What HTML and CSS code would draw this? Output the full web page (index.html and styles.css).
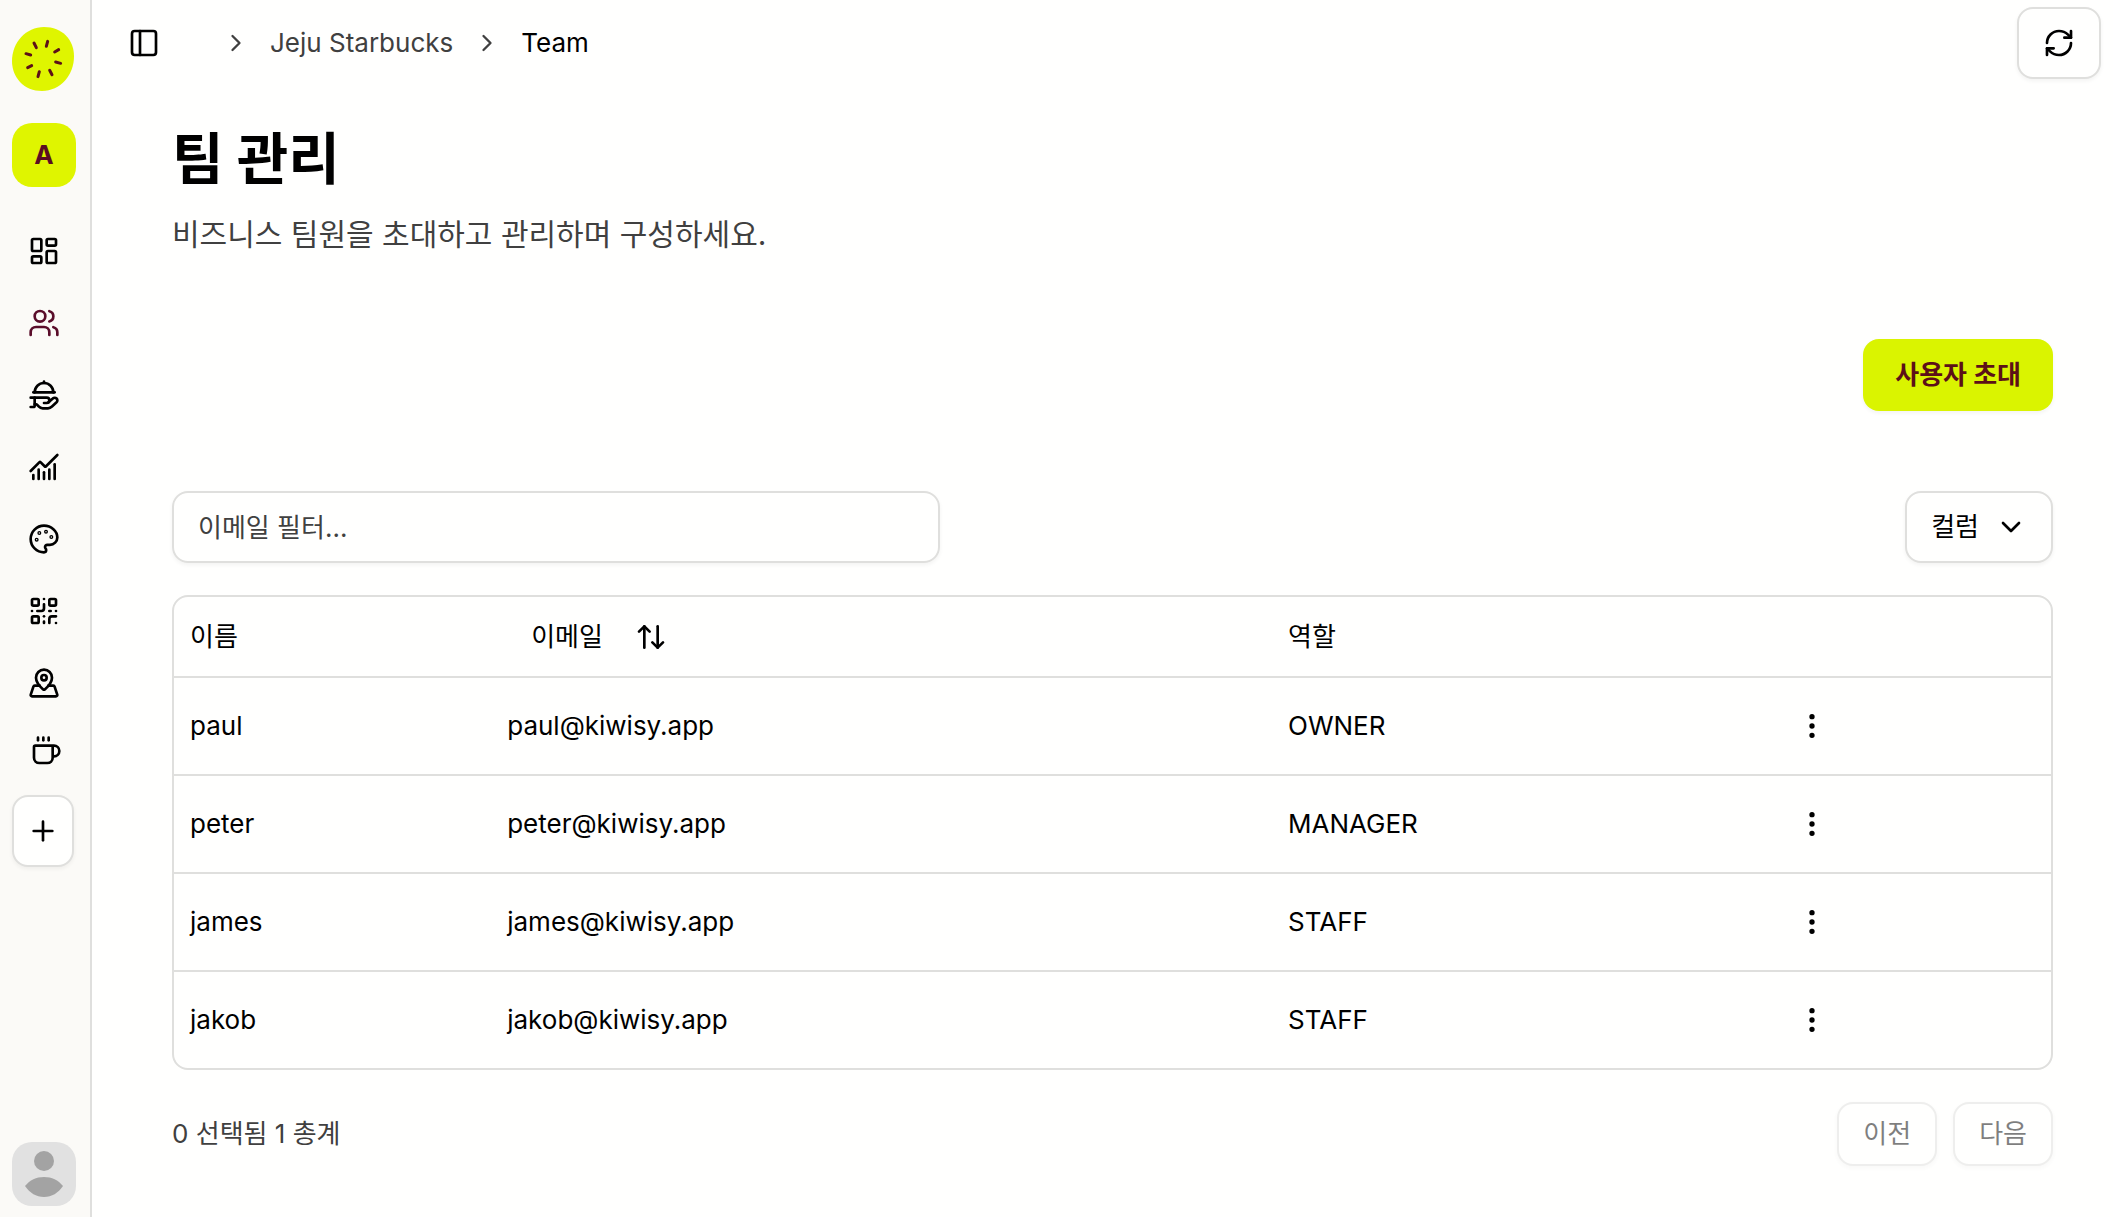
FILE: index.html
```html
<!DOCTYPE html>
<html lang="ko">
<head>
    <meta charset="UTF-8">
    <meta name="viewport" content="width=device-width, initial-scale=1.0">
    <title>팀 관리</title>
    <link rel="stylesheet" href="styles.css">
</head>
<body>
    <aside class="sidebar">
        <a href="#" class="logo" aria-label="Kiwisy">
            <svg viewBox="0 0 186 192">
                <path class="logo-skin" d="M96 0C151 0 186 38 186 88C186 145 145 192 90 192C36 192 0 152 0 102C0 46 42 0 96 0Z"/>
                <path class="logo-seeds" d="M66 48l7 14M107 43l-4 15M128 75l12-7M131 105l15 4M113 130l7 13M82 134l-4 15M47 122l12-6M42 80l14 4"/>
            </svg>
        </a>
        <button type="button" class="workspace">A</button>

        <nav class="nav">
            <a href="#" aria-label="Dashboard">
                <svg class="icon" viewBox="0 0 24 24"><rect width="7" height="9" x="3" y="3" rx="1"/><rect width="7" height="5" x="14" y="3" rx="1"/><rect width="7" height="9" x="14" y="12" rx="1"/><rect width="7" height="5" x="3" y="16" rx="1"/></svg>
            </a>
            <a href="#" class="active" aria-label="Team">
                <svg class="icon" viewBox="0 0 24 24"><path d="M16 21v-2a4 4 0 0 0-4-4H6a4 4 0 0 0-4 4v2"/><circle cx="9" cy="7" r="4"/><path d="M22 21v-2a4 4 0 0 0-3-3.87"/><path d="M16 3.13a4 4 0 0 1 0 7.75"/></svg>
            </a>
            <a href="#" aria-label="Service">
                <svg class="icon" viewBox="0 0 24 24"><path d="M12 3V2"/><path d="m15.4 17.4 3.2-2.8a2 2 0 1 1 2.8 2.9l-3.6 3.3c-.7.8-1.7 1.2-2.8 1.2h-4c-1.1 0-2.1-.4-2.8-1.2l-1.302-1.464A1 1 0 0 0 6.151 19H5"/><path d="M2 14h12a2 2 0 0 1 0 4h-2"/><path d="M4 10h16"/><path d="M5 10a7 7 0 0 1 14 0"/><path d="M5 14v6a1 1 0 0 1-1 1H2"/></svg>
            </a>
            <a href="#" aria-label="Analytics">
                <svg class="icon" viewBox="0 0 24 24"><path d="M12 16v5"/><path d="M16 14v7"/><path d="M20 10v11"/><path d="m22 3-8.646 8.646a.5.5 0 0 1-.708 0L9.354 8.354a.5.5 0 0 0-.707 0L2 15"/><path d="M4 18v3"/><path d="M8 14v7"/></svg>
            </a>
            <a href="#" aria-label="Theme">
                <svg class="icon" viewBox="0 0 24 24"><circle cx="13.5" cy="6.5" r=".5"/><circle cx="17.5" cy="10.5" r=".5"/><circle cx="8.5" cy="7.5" r=".5"/><circle cx="6.5" cy="12.5" r=".5"/><path d="M12 2C6.5 2 2 6.5 2 12s4.5 10 10 10c.926 0 1.648-.746 1.648-1.688 0-.437-.18-.835-.437-1.125-.29-.289-.438-.652-.438-1.125a1.64 1.64 0 0 1 1.668-1.668h1.996c3.051 0 5.555-2.503 5.555-5.554C21.965 6.012 17.461 2 12 2z"/></svg>
            </a>
            <a href="#" aria-label="QR">
                <svg class="icon" viewBox="0 0 24 24"><rect width="5" height="5" x="3" y="3" rx="1"/><rect width="5" height="5" x="16" y="3" rx="1"/><rect width="5" height="5" x="3" y="16" rx="1"/><path d="M21 16h-3a2 2 0 0 0-2 2v3"/><path d="M21 21v.01"/><path d="M12 7v3a2 2 0 0 1-2 2H7"/><path d="M3 12h.01"/><path d="M12 3h.01"/><path d="M12 16v.01"/><path d="M16 12h1"/><path d="M21 12v.01"/><path d="M12 21v-1"/></svg>
            </a>
            <a href="#" aria-label="Locations">
                <svg class="icon" viewBox="0 0 24 24"><path d="M18 8c0 3.613-3.869 7.429-5.393 8.795a1 1 0 0 1-1.214 0C9.87 15.429 6 11.613 6 8a6 6 0 0 1 12 0"/><circle cx="12" cy="8" r="2"/><path d="M8.714 14h-3.71a1 1 0 0 0-.948.683l-2.004 6A1 1 0 0 0 3 22h18a1 1 0 0 0 .948-1.316l-2-6a1 1 0 0 0-.949-.684h-3.712"/></svg>
            </a>
        </nav>

        <div class="shops">
            <a href="#" class="shop" aria-label="Cafe">
                <svg class="icon" viewBox="0 0 24 24"><path d="M10 2v2"/><path d="M14 2v2"/><path d="M16 8a1 1 0 0 1 1 1v8a4 4 0 0 1-4 4H7a4 4 0 0 1-4-4V9a1 1 0 0 1 1-1h14a4 4 0 1 1 0 8h-1"/><path d="M6 2v2"/></svg>
            </a>
            <button type="button" class="btn btn-add" aria-label="Add">
                <svg class="icon" viewBox="0 0 24 24"><path d="M5 12h14"/><path d="M12 5v14"/></svg>
            </button>
        </div>

        <button type="button" class="avatar" aria-label="Account">
            <svg viewBox="0 0 64 64"><circle cx="32" cy="19" r="10"/><path d="M13 44C18 38 24 35 32 35S46 38 51 44C46 51 40 55 32 55S18 51 13 44Z"/></svg>
        </button>
    </aside>

    <main class="main">
        <header class="topbar">
            <button type="button" class="btn-plain" aria-label="Toggle sidebar">
                <svg class="icon" viewBox="0 0 24 24"><rect width="18" height="18" x="3" y="3" rx="2"/><path d="M9 3v18"/></svg>
            </button>
            <nav class="breadcrumb" aria-label="Breadcrumb">
                <svg class="icon icon-sm" viewBox="0 0 24 24"><path d="m9 18 6-6-6-6"/></svg>
                <a href="#">Jeju Starbucks</a>
                <svg class="icon icon-sm" viewBox="0 0 24 24"><path d="m9 18 6-6-6-6"/></svg>
                <span class="current">Team</span>
            </nav>
            <button type="button" class="btn btn-refresh" aria-label="Refresh">
                <svg class="icon" viewBox="0 0 24 24"><path d="M3 12a9 9 0 0 1 9-9 9.75 9.75 0 0 1 6.74 2.74L21 8"/><path d="M21 3v5h-5"/><path d="M21 12a9 9 0 0 1-9 9 9.75 9.75 0 0 1-6.74-2.74L3 16"/><path d="M8 16H3v5"/></svg>
            </button>
        </header>

        <section class="content">
            <h1>팀 관리</h1>
            <p class="subtitle">비즈니스 팀원을 초대하고 관리하며 구성하세요.</p>

            <div class="actions">
                <button type="button" class="btn btn-primary">사용자 초대</button>
            </div>

            <div class="toolbar">
                <input type="text" class="filter" placeholder="이메일 필터..." aria-label="이메일 필터">
                <button type="button" class="btn">
                    컬럼
                    <svg class="icon" viewBox="0 0 24 24"><path d="m6 9 6 6 6-6"/></svg>
                </button>
            </div>

            <div class="table-wrap">
                <table>
                    <thead>
                        <tr>
                            <th class="col-name">이름</th>
                            <th class="col-email">
                                <button type="button" class="btn-plain btn-sort">
                                    이메일
                                    <svg class="icon" viewBox="0 0 24 24"><path d="m21 16-4 4-4-4"/><path d="M17 20V4"/><path d="m3 8 4-4 4 4"/><path d="M7 4v16"/></svg>
                                </button>
                            </th>
                            <th class="col-role">역할</th>
                            <th></th>
                        </tr>
                    </thead>
                    <tbody>
                        <tr>
                            <td>paul</td>
                            <td>paul@kiwisy.app</td>
                            <td>OWNER</td>
                            <td><button type="button" class="btn-plain btn-more" aria-label="Menu"><svg class="icon" viewBox="0 0 24 24"><circle cx="12" cy="12" r="1"/><circle cx="12" cy="5" r="1"/><circle cx="12" cy="19" r="1"/></svg></button></td>
                        </tr>
                        <tr>
                            <td>peter</td>
                            <td>peter@kiwisy.app</td>
                            <td>MANAGER</td>
                            <td><button type="button" class="btn-plain btn-more" aria-label="Menu"><svg class="icon" viewBox="0 0 24 24"><circle cx="12" cy="12" r="1"/><circle cx="12" cy="5" r="1"/><circle cx="12" cy="19" r="1"/></svg></button></td>
                        </tr>
                        <tr>
                            <td>james</td>
                            <td>james@kiwisy.app</td>
                            <td>STAFF</td>
                            <td><button type="button" class="btn-plain btn-more" aria-label="Menu"><svg class="icon" viewBox="0 0 24 24"><circle cx="12" cy="12" r="1"/><circle cx="12" cy="5" r="1"/><circle cx="12" cy="19" r="1"/></svg></button></td>
                        </tr>
                        <tr>
                            <td>jakob</td>
                            <td>jakob@kiwisy.app</td>
                            <td>STAFF</td>
                            <td><button type="button" class="btn-plain btn-more" aria-label="Menu"><svg class="icon" viewBox="0 0 24 24"><circle cx="12" cy="12" r="1"/><circle cx="12" cy="5" r="1"/><circle cx="12" cy="19" r="1"/></svg></button></td>
                        </tr>
                    </tbody>
                </table>
            </div>

            <div class="pagination">
                <p>0 선택됨 1 총계</p>
                <button type="button" class="btn btn-page" disabled>이전</button>
                <button type="button" class="btn btn-page" disabled>다음</button>
            </div>
        </section>
    </main>
</body>
</html>
```

FILE: styles.css
```css
* {
    box-sizing: border-box;
}
body {
    display: flex;
    min-height: 100vh;
    margin: 0;
    font-family: Inter, "Noto Sans CJK KR", sans-serif;
    font-size: 26px;
    line-height: 40px;
    color: #000;
    background: #fffffe;
}
h1, p {
    margin: 0;
}
a {
    color: inherit;
    text-decoration: none;
}
button, input {
    font: inherit;
    color: inherit;
}
button {
    cursor: pointer;
}
.icon {
    display: block;
    flex: none;
    width: 32px;
    height: 32px;
    fill: none;
    stroke: currentColor;
    stroke-width: 2;
    stroke-linecap: round;
    stroke-linejoin: round;
}
.icon-sm {
    width: 28px;
    height: 28px;
}

/* Sidebar */
.sidebar {
    display: flex;
    flex-direction: column;
    flex: none;
    width: 92px;
    padding: 27px 12px 11px;
    background: #fbfaf7;
    border-right: 2px solid #dfdfdd;
}
.logo svg {
    display: block;
    width: 62px;
    height: 64px;
}
.logo-skin {
    fill: #dff500;
}
.logo-seeds {
    fill: none;
    stroke: #5c1018;
    stroke-width: 9;
    stroke-linecap: round;
}
.workspace {
    width: 64px;
    height: 64px;
    margin-top: 32px;
    padding: 0;
    border: none;
    border-radius: 20px;
    background: #dff500;
    color: #5a0d22;
    font-weight: 700;
}
.nav {
    display: flex;
    flex-direction: column;
    gap: 40px;
    padding: 48px 16px 36px;
}
.nav .active {
    color: #5a0d2a;
}
.shops {
    display: flex;
    flex-direction: column;
    gap: 28px;
}
.shop {
    padding-left: 18px;
}
.avatar {
    width: 64px;
    height: 64px;
    margin-top: auto;
    padding: 0;
    border: none;
    border-radius: 20px;
    background: #e1e1e1;
}
.avatar svg {
    display: block;
    fill: #a3a3a3;
}

/* Buttons */
.btn {
    display: flex;
    align-items: center;
    justify-content: center;
    gap: 16px;
    height: 72px;
    padding: 0 24px;
    border: 2px solid #dfdfdd;
    border-radius: 16px;
    background: #fffffe;
    box-shadow: 0 2px 4px rgba(0, 0, 0, 0.05);
}
.btn-add {
    width: 62px;
    padding: 0;
}
.btn-refresh {
    margin-left: auto;
}
.btn-primary {
    padding: 0 32px;
    border: none;
    background: #daf400;
    color: #5c1018;
    font-weight: 700;
}
.btn-page {
    height: 64px;
}
.btn-page:disabled {
    opacity: 0.5;
    color: #000;
    cursor: default;
}
.btn-plain {
    display: flex;
    align-items: center;
    padding: 0;
    border: none;
    background: none;
}

/* Main */
.main {
    flex: 1;
    min-width: 0;
}
.topbar {
    display: flex;
    align-items: center;
    padding: 7px 12px 7px 36px;
}
.breadcrumb {
    display: flex;
    align-items: center;
    gap: 20px;
    padding-left: 62px;
    color: #404040;
}
.current {
    color: #000;
}
.content {
    padding: 37px 60px 40px 80px;
}
h1 {
    font-size: 56px;
    line-height: 72px;
    font-weight: 700;
}
.subtitle {
    margin-top: 19px;
    font-size: 30px;
    color: #404040;
}
.actions {
    display: flex;
    justify-content: flex-end;
    margin-top: 85px;
}
.toolbar {
    display: flex;
    justify-content: space-between;
    margin-top: 80px;
}
.filter {
    width: 768px;
    height: 72px;
    padding: 0 24px;
    border: 2px solid #dfdfdd;
    border-radius: 16px;
    background: transparent;
    box-shadow: 0 2px 4px rgba(0, 0, 0, 0.05);
}
.filter::placeholder {
    color: #404040;
    opacity: 1;
}

/* Table */
.table-wrap {
    margin-top: 32px;
    border: 2px solid #dfdfdd;
    border-radius: 16px;
}
table {
    width: 100%;
    table-layout: fixed;
    border-spacing: 0;
}
.col-name {
    width: 16.9%;
}
.col-email {
    width: 41.6%;
}
.col-role {
    width: 26.2%;
}
th {
    height: 81px;
    padding: 0 16px;
    border-bottom: 2px solid #dfdfdd;
    font-weight: 400;
    text-align: left;
}
td {
    height: 98px;
    padding: 0 16px;
    border-bottom: 2px solid #dfdfdd;
}
tbody tr:last-child td {
    height: 96px;
    border-bottom: none;
}
.btn-sort {
    gap: 32px;
    padding-left: 24px;
}
.btn-more {
    justify-content: center;
    width: 64px;
    height: 64px;
}

.pagination {
    display: flex;
    align-items: center;
    gap: 16px;
    margin-top: 32px;
    color: #404040;
}
.pagination p {
    flex: 1;
}
```
